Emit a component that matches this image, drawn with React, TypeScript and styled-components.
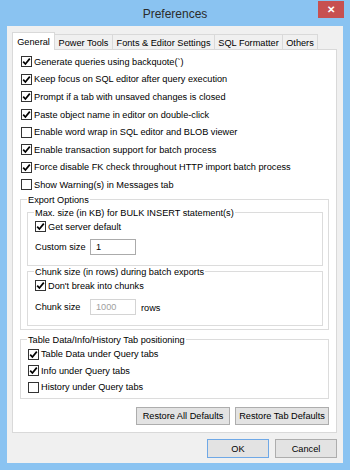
import React from 'react'
import styled, { createGlobalStyle } from 'styled-components'

const GlobalStyle = createGlobalStyle`
    html, body {
        margin: 0;
        padding: 0;
        background: #8ac3f1;
    }
    * {
        box-sizing: border-box;
    }
`

const Window = styled.div`
    display: flex;
    flex-direction: column;
    width: 350px;
    height: 470px;
    background: #8ac3f1;
    font-family: 'Liberation Sans', Arial, sans-serif;
    font-size: 9.2px;
    color: #000;
`

const TitleBar = styled.div`
    display: grid;
    grid-template-columns: 1fr auto 1fr;
    height: 26px;
`

const Title = styled.div`
    grid-column: 2;
    align-self: center;
    font-size: 12px;
    color: #2b2b2b;
    padding-top: 1px;
`

const CloseButton = styled.div`
    grid-column: 3;
    justify-self: end;
    align-self: start;
    display: flex;
    align-items: center;
    justify-content: center;
    width: 26px;
    height: 17px;
    margin: 1px 6px 0 0;
    background: #c75050;
    color: #fff;
    font-size: 10px;
    font-weight: bold;
`

const Client = styled.div`
    display: flex;
    flex-direction: column;
    flex: 1;
    margin: 0 7px 7px 7px;
    padding: 6px 6px 0 5px;
    background: #f0f0f0;
`

const TabStrip = styled.div`
    display: flex;
    align-items: flex-end;
    height: 18px;
    position: relative;
    z-index: 1;
    margin-bottom: -1px;
`

const Tab = styled.div<{ $w: number; $active?: boolean }>`
    display: flex;
    align-items: center;
    justify-content: center;
    width: ${p => p.$w}px;
    height: ${p => (p.$active ? 18 : 16)}px;
    padding-top: ${p => (p.$active ? 0 : 1)}px;
    background: ${p => (p.$active ? '#fff' : '#f0f0f0')};
    border: 1px solid #d9d9d9;
    border-bottom: ${p => (p.$active ? 'none' : '1px solid #d9d9d9')};
    margin-left: ${p => (p.$active ? 0 : -1)}px;
    white-space: nowrap;
`

const Panel = styled.div`
    display: flex;
    flex-direction: column;
    height: 384px;
    padding: 3px 7px 0 7px;
    background: #fff;
    border: 1px solid #d9d9d9;
`

const CheckRow = styled.label<{ $h?: number }>`
    display: flex;
    align-items: center;
    height: ${p => p.$h ?? 17.6}px;
    padding-left: 1px;
    white-space: nowrap;
`

const Box = styled.span`
    display: inline-flex;
    width: 11px;
    height: 11px;
    margin-right: 2px;
    border: 1px solid #333;
    background: #fff;
`

const Group = styled.fieldset<{ $mt?: number; $pb?: number }>`
    margin: ${p => p.$mt ?? 0}px 0 0 0;
    padding: 0 5px ${p => p.$pb ?? 3}px 6px;
    border: 1px solid #dcdcdc;
    min-width: 0;
`

const Legend = styled.legend`
    margin-left: 0;
    padding: 0 1px;
    line-height: 12px;
    white-space: nowrap;
`

const FieldRow = styled.div<{ $mt?: number }>`
    display: flex;
    align-items: center;
    height: 18px;
    margin-top: ${p => p.$mt ?? 0}px;
    padding-left: 1px;
`

const FieldLabel = styled.span`
    width: 55px;
`

const Input = styled.div<{ $disabled?: boolean }>`
    display: flex;
    align-items: center;
    width: 46px;
    height: 16px;
    padding-left: 5px;
    border: 1px solid ${p => (p.$disabled ? '#d4d4d4' : '#ababab')};
    color: ${p => (p.$disabled ? '#a0a0a0' : '#000')};
    background: #fff;
`

const Unit = styled.span`
    margin: 3px 0 0 5px;
`

const ButtonRow = styled.div<{ $mt: number; $gap: number }>`
    display: flex;
    justify-content: flex-end;
    gap: ${p => p.$gap}px;
    margin-top: ${p => p.$mt}px;
`

const Button = styled.div<{ $w: number; $h: number; $default?: boolean }>`
    display: flex;
    align-items: center;
    justify-content: center;
    width: ${p => p.$w}px;
    height: ${p => p.$h}px;
    background: #e3e3e3;
    border: 1px solid ${p => (p.$default ? '#6fa8e6' : '#adadad')};
    white-space: nowrap;
`

const Check: React.FC<{ checked?: boolean; label: string; h?: number }> = ({ checked, label, h }) => (
    <CheckRow $h={h}>
        <Box>
            {checked && (
                <svg width='9' height='9' viewBox='0 0 9 9'>
                    <path d='M1.2 4.6 L3.4 7 L7.8 1.6' fill='none' stroke='#000' strokeWidth='1.7' />
                </svg>
            )}
        </Box>
        {label}
    </CheckRow>
)

const App = () => {
    return (
        <Window>
            <GlobalStyle />
            <TitleBar>
                <Title>Preferences</Title>
                <CloseButton>✕</CloseButton>
            </TitleBar>
            <Client>
                <TabStrip>
                    <Tab $w={43} $active>General</Tab>
                    <Tab $w={59}>Power Tools</Tab>
                    <Tab $w={103}>Fonts &amp; Editor Settings</Tab>
                    <Tab $w={69}>SQL Formatter</Tab>
                    <Tab $w={36}>Others</Tab>
                </TabStrip>
                <Panel>
                    <Check checked label='Generate queries using backquote(`)' />
                    <Check checked label='Keep focus on SQL editor after query execution' />
                    <Check checked label='Prompt if a tab with unsaved changes is closed' />
                    <Check checked label='Paste object name in editor on double-click' />
                    <Check label='Enable word wrap in SQL editor and BLOB viewer' />
                    <Check checked label='Enable transaction support for batch process' />
                    <Check checked label='Force disable FK check throughout HTTP import batch process' />
                    <Check label='Show Warning(s) in Messages tab' />

                    <Group>
                        <Legend>Export Options</Legend>
                        <Group $mt={1} $pb={9}>
                            <Legend>Max. size (in KB) for BULK INSERT statement(s)</Legend>
                            <Check checked label='Get server default' h={16} />
                            <FieldRow $mt={3}>
                                <FieldLabel>Custom size</FieldLabel>
                                <Input>1</Input>
                            </FieldRow>
                        </Group>
                        <Group $mt={0} $pb={9}>
                            <Legend>Chunk size (in rows) during batch exports</Legend>
                            <Check checked label="Don't break into chunks" h={16} />
                            <FieldRow $mt={4}>
                                <FieldLabel>Chunk size</FieldLabel>
                                <Input $disabled>1000</Input>
                                <Unit>rows</Unit>
                            </FieldRow>
                        </Group>
                    </Group>

                    <Group $mt={4}>
                        <Legend>Table Data/Info/History Tab positioning</Legend>
                        <Check checked label='Table Data under Query tabs' h={16.5} />
                        <Check checked label='Info under Query tabs' h={16.5} />
                        <Check label='History under Query tabs' h={16.5} />
                    </Group>

                    <ButtonRow $mt={8} $gap={5}>
                        <Button $w={94} $h={18}>Restore All Defaults</Button>
                        <Button $w={94} $h={18}>Restore Tab Defaults</Button>
                    </ButtonRow>
                </Panel>
                <ButtonRow $mt={6} $gap={6}>
                    <Button $w={62} $h={19} $default>OK</Button>
                    <Button $w={62} $h={19}>Cancel</Button>
                </ButtonRow>
            </Client>
        </Window>
    )
}

export default App
